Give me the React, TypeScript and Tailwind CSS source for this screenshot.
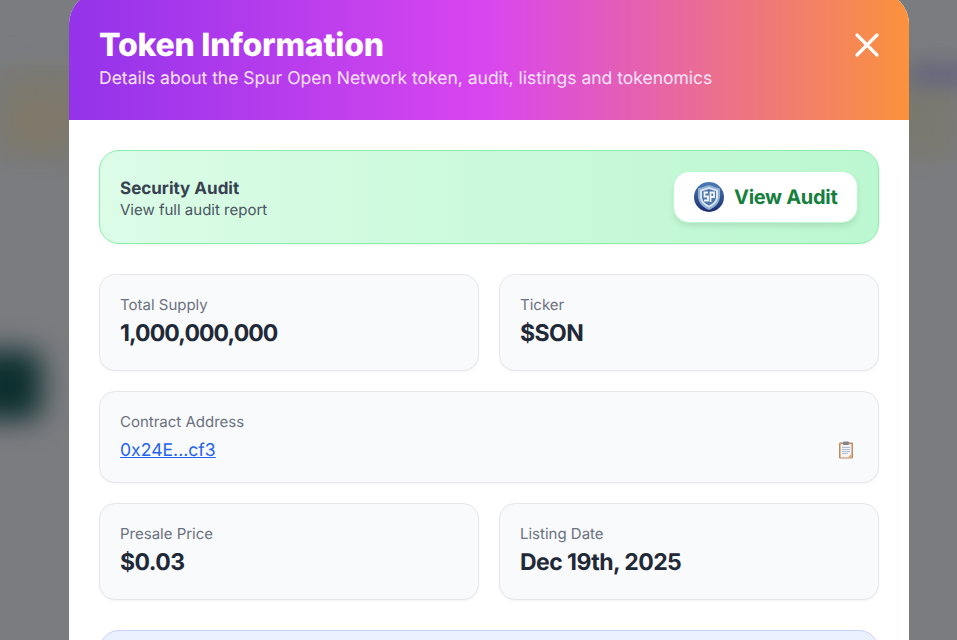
import React from "react";

function Backdrop() {
  return (
    <div className="absolute inset-0 overflow-hidden bg-[#7b7c80]">
      <div className="absolute left-0 top-[68px] h-[90px] w-full bg-[#7a796f] blur-[14px]" />
      <div className="absolute left-[10px] top-[95px] h-[50px] w-[60px] bg-[#80796a] blur-[12px]" />
      <div className="absolute left-[910px] top-[64px] h-[22px] w-[60px] bg-[#65657f] blur-[10px]" />
      <div className="absolute left-[-30px] top-[350px] h-[70px] w-[72px] rounded-2xl bg-[#0d2f2e] blur-[14px]" />
    </div>
  );
}

function Shield() {
  return (
    <svg width="30" height="30" viewBox="0 0 30 30" className="shrink-0">
      <defs>
        <linearGradient id="ball" x1="0" y1="0" x2="0" y2="1">
          <stop offset="0" stopColor="#4a7cb5" />
          <stop offset="1" stopColor="#1a2c70" />
        </linearGradient>
      </defs>
      <circle cx="15" cy="15" r="15" fill="url(#ball)" />
      <path d="M15 3 L26 6.5 V14 C26 21 21 25.5 15 28 C9 25.5 4 21 4 14 V6.5 Z" fill="#8fb0d2" />
      <path d="M15 5 L24 8 V14.5 C24 20 19.5 23.5 15 25.6 C10.5 23.5 6 20 6 14.5 V8 Z" fill="#dbe6f1" />
      <path d="M15 7 L22 9.3 V15 C22 19 18.5 22 15 23.4 C11.5 22 8 19 8 15 V9.3 Z" fill="#4c77a8" />
      <path d="M14 10.5 H10.5 V14.5 H14 V18.5 H10" fill="none" stroke="#f2f6fb" strokeWidth="1.8" />
      <path d="M16.5 20 V10.5 H20 V15 H16.5" fill="none" stroke="#f2f6fb" strokeWidth="1.8" />
    </svg>
  );
}

function Clipboard() {
  return (
    <svg width="16" height="18" viewBox="0 0 16 18" className="shrink-0">
      <rect x="1" y="1.5" width="14" height="16" rx="1" fill="#c08a63" />
      <rect x="2.5" y="3" width="11" height="13.5" fill="#f6f1ec" />
      <path d="M10 16.5 L13.5 13 V16.5 Z" fill="#d9a578" />
      <rect x="5" y="0.5" width="6" height="3.5" rx="1" fill="#85858d" />
      <path d="M4 6.5 H12 M4 8.5 H12 M4 10.5 H12 M4 12.5 H10" stroke="#a9bfdc" strokeWidth="1" />
    </svg>
  );
}

function Stat({ label, value, tight }: { label: string; value: string; tight?: boolean }) {
  return (
    <div className="h-[97px] rounded-2xl border border-[#e5e7eb] bg-[#f9fafb] px-5 pt-[20px] shadow-[0_1px_2px_rgba(0,0,0,0.05)]">
      <div className="text-[15px] leading-5 text-[#6b7280]">{label}</div>
      <div className={tight ? "mt-[2px] text-[23px] font-bold leading-8 tracking-[-0.9px] text-[#1f2937]" : "mt-[2px] text-[23px] font-bold leading-8 tracking-[-0.55px] text-[#1f2937]"}>{value}</div>
    </div>
  );
}

export default function App() {
  return (
    <div className="relative h-[640px] w-[957px] overflow-hidden font-['Inter',sans-serif] [text-rendering:geometricPrecision]">
      <Backdrop />
      <div className="relative ml-[69px] -mt-[8px] w-[840px] overflow-hidden rounded-[32px] bg-white">
        <div className="flex h-[128px] items-start justify-between bg-[linear-gradient(90deg,#9333ea_0%,#d946ef_50%,#fb923c_100%)] px-[30px] pt-[33px]">
          <div>
            <h1 className="text-[32px] font-extrabold leading-[40px] tracking-[-0.25px] text-white">Token Information</h1>
            <p className="mt-[1px] text-[17.5px] leading-[26px] text-[#f8e3fc]">
              Details about the Spur Open Network token, audit, listings and tokenomics
            </p>
          </div>
          <svg width="28" height="28" viewBox="0 0 28 28" className="mr-[-2px] mt-[6px] text-white">
            <path d="M4 4 L24 24 M24 4 L4 24" stroke="currentColor" strokeWidth="3.2" strokeLinecap="round" />
          </svg>
        </div>
        <div className="flex flex-col p-[30px]">
          <div className="flex h-[94px] items-center justify-between rounded-[20px] border border-[#86efac] bg-[linear-gradient(90deg,#dcfce7,#bbf7d0)] pl-5 pr-5 shadow-[0_1px_2px_rgba(0,0,0,0.05)]">
            <div className="pt-[4px]">
              <div className="text-[17px] font-bold leading-[22px] text-[#374151]">Security Audit</div>
              <div className="text-[15px] leading-5 text-[#4b5563]">View full audit report</div>
            </div>
            <div className="flex h-[52px] w-[185px] items-center gap-[10px] rounded-2xl border border-[#bbf7d0] bg-white pl-5 shadow-[0_4px_6px_-1px_rgba(0,0,0,0.1)]">
              <Shield />
              <span className="text-[20px] font-bold tracking-[-0.3px] text-[#15803d]">View Audit</span>
            </div>
          </div>

          <div className="mt-[30px] grid grid-cols-2 gap-5">
            <Stat label="Total Supply" value="1,000,000,000" tight />
            <Stat label="Ticker" value="$SON" />
            <div className="col-span-2 flex h-[92px] items-end justify-between rounded-2xl border border-[#e5e7eb] bg-[#f9fafb] px-5 pb-[19px] shadow-[0_1px_2px_rgba(0,0,0,0.05)]">
              <div>
                <div className="text-[15px] leading-5 text-[#6b7280]">Contract Address</div>
                <div className="mt-[7px] text-[17.6px] leading-6 text-[#2563eb] underline">0x24E...cf3</div>
              </div>
              <div className="mb-[4px] mr-[4px]"><Clipboard /></div>
            </div>
            <Stat label="Presale Price" value="$0.03" />
            <Stat label="Listing Date" value="Dec 19th, 2025" />
          </div>

          <div className="mt-[30px] h-[100px] rounded-[20px] border border-[#c7d2fe] bg-[#eaf0fe]" />
        </div>
      </div>
    </div>
  );
}
